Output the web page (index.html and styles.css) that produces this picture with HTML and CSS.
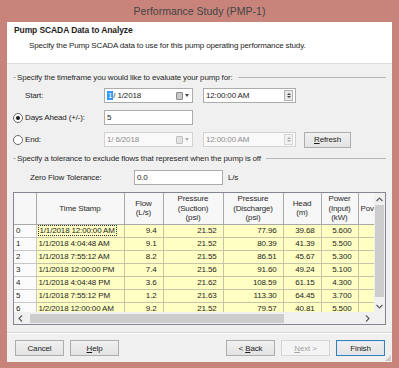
FILE: index.html
```html
<!DOCTYPE html>
<html lang="en">
<head>
    <meta charset="UTF-8">
    <meta name="viewport" content="width=device-width, initial-scale=1.0">
    <title>Performance Study (PMP-1)</title>
    <link rel="stylesheet" href="styles.css">
</head>
<body>
    <div class="window">
        <div class="titlebar">Performance Study (PMP-1)</div>
        <div class="client">
            <div class="wizard-header">
                <div class="wizard-title">Pump SCADA Data to Analyze</div>
                <div class="wizard-desc">Specify the Pump SCADA data to use for this pump operating performance study.</div>
            </div>

            <div class="wizard-body">
                <div class="group-label"><span>Specify the timeframe you would like to evaluate your pump for:</span></div>

                <div class="form-row">
                    <span class="radio-slot"></span>
                    <span class="row-label">Start:</span>
                    <div class="picker">
                        <span class="picker-text"><span class="sel">1</span>/ 1/2018</span>
                        <span class="cal-btn"><span class="cal-icon"></span><span class="caret"></span></span>
                    </div>
                    <div class="picker time">
                        <span class="picker-text">12:00:00 AM</span>
                        <span class="spin"><span class="up"></span><span class="down"></span></span>
                    </div>
                </div>

                <div class="form-row">
                    <span class="radio checked"></span>
                    <span class="row-label">Days Ahead (+/-):</span>
                    <div class="textbox">5</div>
                </div>

                <div class="form-row">
                    <span class="radio"></span>
                    <span class="row-label">End:</span>
                    <div class="picker disabled">
                        <span class="picker-text">1/ 6/2018</span>
                        <span class="cal-btn"><span class="cal-icon"></span><span class="caret"></span></span>
                    </div>
                    <div class="picker time disabled">
                        <span class="picker-text">12:00:00 AM</span>
                        <span class="spin"><span class="up"></span><span class="down"></span></span>
                    </div>
                    <button class="btn refresh"><u>R</u>efresh</button>
                </div>

                <div class="group-label second"><span>Specify a tolerance to exclude flows that represent when the pump is off</span></div>

                <div class="tolerance-row">
                    <span class="tol-label">Zero Flow Tolerance:</span>
                    <div class="textbox tol">0.0</div>
                    <span class="unit">L/s</span>
                </div>

                <div class="grid">
                    <div class="grid-view">
                        <table>
                            <colgroup>
                                <col class="c-idx"><col class="c-time"><col class="c-flow"><col class="c-pres"><col class="c-pres"><col class="c-head"><col class="c-pow"><col class="c-more">
                            </colgroup>
                            <thead>
                                <tr>
                                    <th></th>
                                    <th>Time Stamp</th>
                                    <th>Flow<br>(L/s)</th>
                                    <th>Pressure<br>(Suction)<br>(psi)</th>
                                    <th>Pressure<br>(Discharge)<br>(psi)</th>
                                    <th>Head<br>(m)</th>
                                    <th>Power<br>(Input)<br>(kW)</th>
                                    <th class="more">Pov</th>
                                </tr>
                            </thead>
                            <tbody>
                                <tr><td class="idx">0</td><td class="ts"><span class="focus">1/1/2018 12:00:00 AM</span></td><td>9.4</td><td>21.52</td><td>77.96</td><td>39.68</td><td>5.600</td><td></td></tr>
                                <tr><td class="idx">1</td><td class="ts">1/1/2018 4:04:48 AM</td><td>9.1</td><td>21.52</td><td>80.39</td><td>41.39</td><td>5.500</td><td></td></tr>
                                <tr><td class="idx">2</td><td class="ts">1/1/2018 7:55:12 AM</td><td>8.2</td><td>21.55</td><td>86.51</td><td>45.67</td><td>5.300</td><td></td></tr>
                                <tr><td class="idx">3</td><td class="ts">1/1/2018 12:00:00 PM</td><td>7.4</td><td>21.56</td><td>91.60</td><td>49.24</td><td>5.100</td><td></td></tr>
                                <tr><td class="idx">4</td><td class="ts">1/1/2018 4:04:48 PM</td><td>3.6</td><td>21.62</td><td>108.59</td><td>61.15</td><td>4.300</td><td></td></tr>
                                <tr><td class="idx">5</td><td class="ts">1/1/2018 7:55:12 PM</td><td>1.2</td><td>21.63</td><td>113.30</td><td>64.45</td><td>3.700</td><td></td></tr>
                                <tr><td class="idx">6</td><td class="ts">1/2/2018 12:00:00 AM</td><td>9.2</td><td>21.52</td><td>79.57</td><td>40.81</td><td>5.500</td><td></td></tr>
                            </tbody>
                        </table>
                    </div>
                    <div class="vscroll">
                        <svg class="arrow" width="7" height="5" viewBox="0 0 7 5"><path d="M0.5 4 L3.5 1 L6.5 4" fill="none" stroke="#606060" stroke-width="1.2"/></svg>
                        <div class="vtrack"><div class="vthumb"></div></div>
                        <svg class="arrow" width="7" height="5" viewBox="0 0 7 5"><path d="M0.5 1 L3.5 4 L6.5 1" fill="none" stroke="#606060" stroke-width="1.2"/></svg>
                    </div>
                    <div class="hscroll">
                        <svg class="arrow" width="5" height="7" viewBox="0 0 5 7"><path d="M4 0.5 L1 3.5 L4 6.5" fill="none" stroke="#606060" stroke-width="1.2"/></svg>
                        <div class="htrack"><div class="hthumb"></div></div>
                        <svg class="arrow" width="5" height="7" viewBox="0 0 5 7"><path d="M1 0.5 L4 3.5 L1 6.5" fill="none" stroke="#606060" stroke-width="1.2"/></svg>
                    </div>
                    <div class="corner"></div>
                </div>
            </div>

            <div class="wizard-footer">
                <button class="btn">Cancel</button>
                <button class="btn"><u>H</u>elp</button>
                <span class="spacer"></span>
                <button class="btn">&lt; <u>B</u>ack</button>
                <button class="btn" disabled><u>N</u>ext &gt;</button>
                <button class="btn default">Finish</button>
            </div>
            <div class="grip"></div>
        </div>
    </div>
</body>
</html>
```

FILE: styles.css
```css
* {
    margin: 0;
    padding: 0;
    box-sizing: border-box;
}

body {
    width: 399px;
    height: 368px;
    font-family: "Liberation Sans", Arial, sans-serif;
    font-size: 8px;
    letter-spacing: -0.15px;
    color: #1e1e1e;
    background-color: #c8847b;
    overflow: hidden;
}

.window {
    height: 368px;
    padding: 0 7px 6px 7px;
    display: flex;
    flex-direction: column;
}

.titlebar {
    height: 22px;
    line-height: 23px;
    text-align: center;
    font-size: 10.5px;
    letter-spacing: 0;
    color: #444;
}

.client {
    flex: 1;
    background-color: #f0f0f0;
    display: flex;
    flex-direction: column;
    position: relative;
}

.wizard-header {
    height: 42px;
    background-color: #fff;
    border-bottom: 1px solid #dcdcdc;
    padding: 3px 0 0 7px;
}

.wizard-title {
    font-weight: bold;
    font-size: 8.5px;
    letter-spacing: -0.1px;
    line-height: 11px;
    height: 11px;
}

.wizard-desc {
    margin-top: 4px;
    padding-left: 15px;
    line-height: 11px;
}

.wizard-body {
    padding: 8px 6px 0 6px;
}

/* group headings with a rule */
.group-label {
    display: flex;
    align-items: center;
    height: 11px;
    line-height: 11px;
    color: #2a2a2a;
}

.group-label::before {
    content: "";
    width: 3px;
    border-top: 1px solid #b9b9b9;
    margin-right: 1px;
}

.group-label::after {
    content: "";
    flex: 1;
    border-top: 1px solid #b9b9b9;
    margin-left: 5px;
}

.group-label.second {
    margin-top: 6px;
}

.form-row {
    display: flex;
    align-items: center;
    height: 15px;
    margin-top: 7px;
}

.group-label + .form-row {
    margin-top: 5px;
}

.radio-slot,
.radio {
    width: 10px;
    height: 10px;
    margin-right: 2px;
    flex: 0 0 auto;
}

.radio {
    border: 1px solid #6a6a6a;
    border-radius: 50%;
    background-color: #fff;
    display: flex;
    align-items: center;
    justify-content: center;
}

.radio.checked::after {
    content: "";
    width: 4px;
    height: 4px;
    border-radius: 50%;
    background-color: #1a1a1a;
}

.row-label {
    width: 79px;
    flex: 0 0 auto;
}

.picker,
.textbox {
    height: 15px;
    width: 89px;
    border: 1px solid #acacac;
    background-color: #fff;
    display: flex;
    align-items: center;
    padding-left: 2px;
}

.picker-text {
    flex: 1;
    white-space: nowrap;
}

.sel {
    background-color: #3399ff;
    color: #fff;
    padding: 0 1px;
}

.cal-btn {
    display: flex;
    align-items: center;
    gap: 2px;
    margin-right: 3px;
}

.cal-icon {
    width: 7px;
    height: 8px;
    background-color: #c9c9c9;
    border: 1px solid #8c8c8c;
    border-radius: 1px;
}

.caret {
    width: 0;
    height: 0;
    border-left: 2.5px solid transparent;
    border-right: 2.5px solid transparent;
    border-top: 3px solid #444;
}

.picker.time {
    width: 93px;
    margin-left: 10px;
}

.spin {
    width: 9px;
    height: 11px;
    border: 1px solid #b5b5b5;
    background-color: #e8e8e8;
    display: flex;
    flex-direction: column;
    align-items: center;
    justify-content: center;
    gap: 1px;
    margin-right: 2px;
}

.spin .up,
.spin .down {
    width: 0;
    height: 0;
    border-left: 2px solid transparent;
    border-right: 2px solid transparent;
}

.spin .up {
    border-bottom: 2px solid #444;
}

.spin .down {
    border-top: 2px solid #444;
}

.picker.disabled {
    border-color: #d2d2d2;
    background-color: #f9f9f9;
    color: #8c8c8c;
}

.picker.disabled .cal-icon {
    background-color: #e2e2e2;
    border-color: #c0c0c0;
}

.picker.disabled .caret {
    border-top-color: #b0b0b0;
}

.picker.disabled .spin {
    border-color: #d6d6d6;
    background-color: #f2f2f2;
}

.picker.disabled .spin .up {
    border-bottom-color: #a8a8a8;
}

.picker.disabled .spin .down {
    border-top-color: #a8a8a8;
}

.btn {
    font-family: inherit;
    font-size: 8px;
    letter-spacing: -0.15px;
    color: #1e1e1e;
    width: 49px;
    height: 16px;
    border: 1px solid #adadad;
    background: linear-gradient(#f0f0f0, #e3e3e3);
    cursor: pointer;
}

.btn.refresh {
    margin-left: 8px;
    width: 47px;
    height: 16px;
}

.btn.default {
    border-color: #3c7fb1;
    box-shadow: inset 0 0 0 1px #d8eaf7;
}

.btn:disabled {
    color: #a3a3a3;
    border-color: #d5d5d5;
    background: #f4f4f4;
}

.tolerance-row {
    display: flex;
    align-items: center;
    height: 15px;
    margin-top: 6px;
    padding-left: 17px;
}

.tol-label {
    width: 104px;
}

.textbox.tol {
    width: 89px;
}

.unit {
    margin-left: 5px;
}

/* data grid */
.grid {
    margin-top: 7px;
    width: 373px;
    height: 133px;
    border: 1px solid #828790;
    background-color: #fff;
    display: grid;
    grid-template-columns: 1fr 11px;
    grid-template-rows: 1fr 12px;
}

.grid-view {
    overflow: hidden;
}

table {
    border-collapse: collapse;
    table-layout: fixed;
    width: 411px;
    font-size: 8px;
}

.c-idx { width: 22px; }
.c-time { width: 88px; }
.c-flow { width: 39px; }
.c-pres { width: 60px; }
.c-head { width: 38px; }
.c-pow { width: 37px; }
.c-more { width: 67px; }

th {
    height: 31px;
    font-weight: normal;
    line-height: 9.5px;
    background-color: #f7f7f7;
    border: 1px solid #a9a9a9;
    border-top: none;
    vertical-align: middle;
    text-align: center;
    color: #2a2a2a;
}

th:first-child {
    border-left: none;
}

th.more {
    text-align: left;
    padding-left: 2px;
    white-space: nowrap;
}

td {
    height: 13px;
    line-height: 11px;
    background-color: #ffffc4;
    border: 1px solid #c4c4a8;
    text-align: right;
    padding-right: 6px;
    white-space: nowrap;
    overflow: hidden;
}

td.idx {
    background-color: #fbfbfb;
    border-color: #c8c8c8;
    border-left: none;
    text-align: left;
    padding-left: 2px;
}

td.ts {
    text-align: left;
    padding-left: 2px;
}

.focus {
    outline: 1px dotted #333;
    outline-offset: 0;
    padding: 0 1px;
}

.vscroll {
    grid-row: 1;
    grid-column: 2;
    background-color: #f0f0f0;
    display: flex;
    flex-direction: column;
    align-items: center;
    padding: 4px 0 3px;
}

.vtrack {
    flex: 1;
    width: 100%;
    padding: 3px 1px;
}

.vthumb {
    height: 92px;
    background-color: #cdcdcd;
}

.hscroll {
    grid-row: 2;
    grid-column: 1;
    background-color: #f0f0f0;
    display: flex;
    align-items: center;
    padding: 0 4px;
}

.htrack {
    flex: 1;
    height: 100%;
    padding: 2px 3px 1px 7px;
}

.hthumb {
    width: 254px;
    height: 100%;
    background-color: #cdcdcd;
}

.corner {
    grid-row: 2;
    grid-column: 2;
    background-color: #f0f0f0;
}

.wizard-footer {
    margin-top: 7px;
    border-top: 1px solid #d5d5d5;
    box-shadow: inset 0 1px 0 #fff;
    display: flex;
    gap: 6px;
    padding: 7px 7px 0 8px;
}

.spacer {
    flex: 1;
}

.grip {
    position: absolute;
    right: 1px;
    bottom: 1px;
    width: 6px;
    height: 6px;
    background-image: radial-gradient(circle, #a0a0a0 0.6px, transparent 0.8px);
    background-size: 2px 2px;
    clip-path: polygon(100% 0, 100% 100%, 0 100%);
}
```
